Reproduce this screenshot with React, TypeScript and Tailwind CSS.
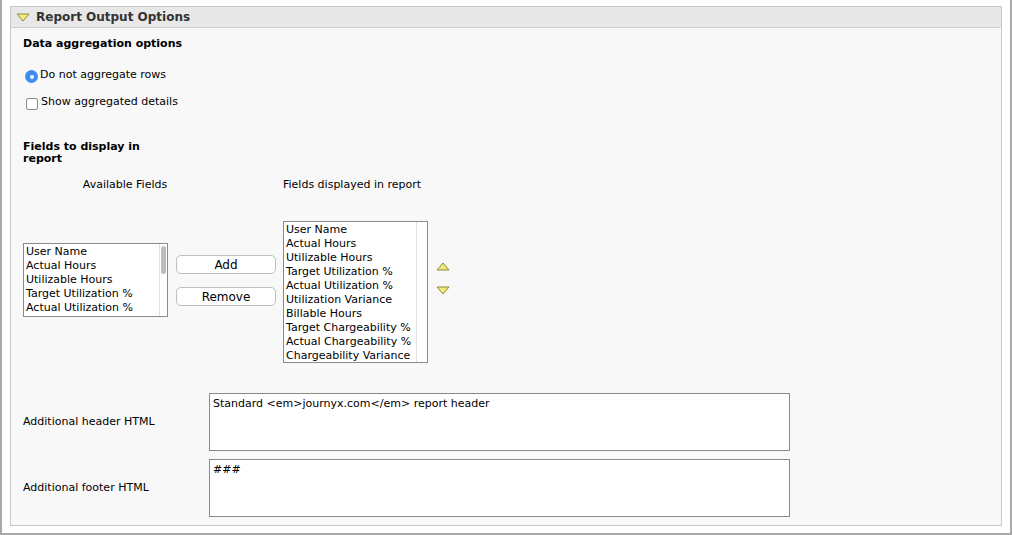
export default function App() {
  const f = { fontFamily: '"DejaVu Sans", Verdana, sans-serif' };
  const left = ["User Name", "Actual Hours", "Utilizable Hours", "Target Utilization %", "Actual Utilization %"];
  const right = ["User Name", "Actual Hours", "Utilizable Hours", "Target Utilization %", "Actual Utilization %", "Utilization Variance", "Billable Hours", "Target Chargeability %", "Actual Chargeability %", "Chargeability Variance"];
  return (
    <div style={f} className="w-[1012px] h-[535px] bg-white border-2 border-[#a8a8a8] border-t-0 pt-[6px] px-[8px] text-[11px] text-black leading-[14px]">
      <div className="border border-[#c8c8c8] h-[520px] bg-[#f8f8f8]">
        <div className="h-[21px] bg-[#e8e8e8] border-b border-[#cfcfcf] flex items-center pl-[5px]">
          <svg width="14" height="9" viewBox="0 0 14 9"><polygon points="1,1 13,1 7,8" fill="#f2ea7a" stroke="#8a8a40" strokeWidth="1" /></svg>
          <span className="ml-[6px] font-bold text-[12px] text-[#333]">Report Output Options</span>
        </div>
        <div className="pl-[12px] relative">
          <div className="font-bold mt-[9px] text-[11px]">Data aggregation options</div>
          <div className="flex items-center mt-[17px] h-[14px]">
            <span className="w-[13px] h-[13px] rounded-full bg-[#3b8ff0] flex items-center justify-center mt-[3px] ml-[2px]"><span className="w-[4px] h-[4px] rounded-full bg-white" /></span>
            <span className="ml-[2px]">Do not aggregate rows</span>
          </div>
          <div className="flex items-center mt-[13px] h-[14px]">
            <span className="w-[12px] h-[12px] border border-[#8a8a8a] rounded-[2px] bg-white mt-[3px] ml-[3px]" />
            <span className="ml-[3px]">Show aggregated details</span>
          </div>
          <div className="font-bold mt-[32px] w-[140px] leading-[12px] text-[11px]">Fields to display in report</div>
          <div className="flex mt-[13px]">
            <div className="w-[210px] text-center pr-[6px]">Available Fields</div>
            <div className="ml-[50px]">Fields displayed in report</div>
          </div>
          <div className="flex mt-[29px] h-[142px]">
            <div className="w-[145px] h-[74px] mt-[22px] border border-[#8a8a8a] bg-white flex">
              <div className="flex-1 pl-[2px] pt-[1px] overflow-hidden">{left.map(s => <div key={s}>{s}</div>)}</div>
              <div className="w-[8px] border-l border-[#e0e0e0] relative"><div className="absolute left-[1px] top-[2px] w-[5px] h-[28px] rounded bg-[#bdbdbd]" /></div>
            </div>
            <div className="flex flex-col ml-[8px] mt-[34px] gap-[13px]">
              <button className="w-[100px] h-[19px] rounded-[5px] border border-[#c0c0c0] bg-white text-[12px]">Add</button>
              <button className="w-[100px] h-[19px] rounded-[5px] border border-[#c0c0c0] bg-white text-[12px]">Remove</button>
            </div>
            <div className="w-[145px] h-[142px] ml-[7px] border border-[#8a8a8a] bg-white flex">
              <div className="flex-1 pl-[2px] pt-[1px] overflow-hidden">{right.map(s => <div key={s}>{s}</div>)}</div>
              <div className="w-[11px] border-l border-[#e0e0e0]" />
            </div>
            <div className="flex flex-col ml-[8px] mt-[41px] gap-[15px]">
              <svg width="14" height="9" viewBox="0 0 14 9"><polygon points="1,8 13,8 7,1" fill="#f2ea7a" stroke="#8a8a40" /></svg>
              <svg width="14" height="9" viewBox="0 0 14 9"><polygon points="1,1 13,1 7,8" fill="#f2ea7a" stroke="#8a8a40" /></svg>
            </div>
          </div>
          <div className="flex items-center mt-[30px]">
            <div className="w-[186px]">Additional header HTML</div>
            <div className="w-[581px] h-[58px] border border-[#8a8a8a] bg-white px-[3px] py-[3px]">Standard &lt;em&gt;journyx.com&lt;/em&gt; report header</div>
          </div>
          <div className="flex items-center mt-[8px]">
            <div className="w-[186px]">Additional footer HTML</div>
            <div className="w-[581px] h-[58px] border border-[#8a8a8a] bg-white px-[3px] py-[3px]">###</div>
          </div>
        </div>
      </div>
    </div>
  );
}
